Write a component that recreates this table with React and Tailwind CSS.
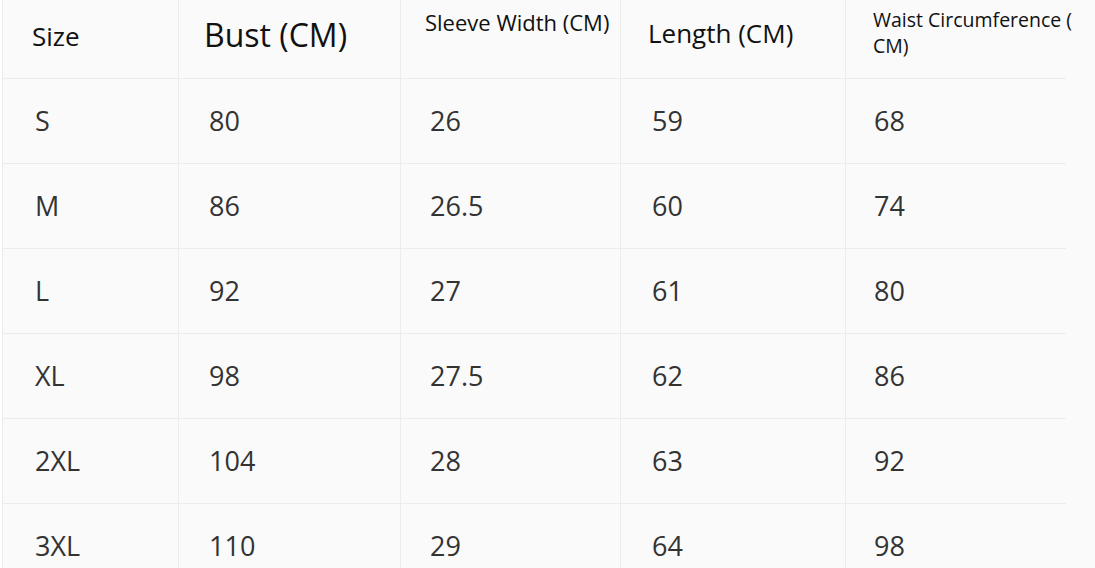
const font = { fontFamily: '"Open Sans", "Noto Sans", sans-serif' };

const rows = [
  ['S', '80', '26', '59', '68'],
  ['M', '86', '26.5', '60', '74'],
  ['L', '92', '27', '61', '80'],
  ['XL', '98', '27.5', '62', '86'],
  ['2XL', '104', '28', '63', '92'],
  ['3XL', '110', '29', '64', '98'],
];

// left padding per column so the numbers line up with the picture
const bodyPad = ['pl-[32px]', 'pl-[30px]', 'pl-[29px]', 'pl-[31px]', 'pl-[28px]'];
const cellLine = ['border-l border-r', 'border-r', 'border-r', 'border-r', ''];

export default function App() {
  return (
    <div className="w-[1095px] h-[568px] overflow-hidden bg-white" style={font}>
      <div className="pl-[2px]">
        <div className="grid grid-cols-[177px_222px_220px_225px_220px] bg-[#fafafa]">
          {/* header row */}
          <div className="h-[79px] border-l border-r border-b border-[#ececec] pl-[29px] pt-[19px] text-[26px] leading-[34px] text-[#111]">
            Size
          </div>
          <div className="h-[79px] border-r border-b border-[#ececec] pl-[25px] pt-[14px] text-[32px] leading-[42px] text-[#111]">
            Bust (CM)
          </div>
          <div className="h-[79px] border-r border-b border-[#ececec] pl-[24px] pt-[7px] text-[22px] leading-[30px] text-[#111]">
            Sleeve Width (CM)
          </div>
          <div className="h-[79px] border-r border-b border-[#ececec] pl-[27px] pt-[16px] text-[26px] leading-[34px] text-[#111]">
            Length (CM)
          </div>
          <div className="h-[79px] border-b border-[#ececec] pl-[27px] pt-[7px] text-[19.5px] leading-[26px] text-[#111] whitespace-nowrap">
            Waist Circumference (
            <br />
            CM)
          </div>

          {rows.map((row, r) =>
            row.map((val, c) => (
              <div
                key={r + '-' + c}
                className={`h-[85px] flex items-center border-b border-[#ececec] ${cellLine[c]} ${bodyPad[c]} text-[27px] text-[#333]`}
              >
                {val}
              </div>
            ))
          )}
        </div>
      </div>
    </div>
  );
}
